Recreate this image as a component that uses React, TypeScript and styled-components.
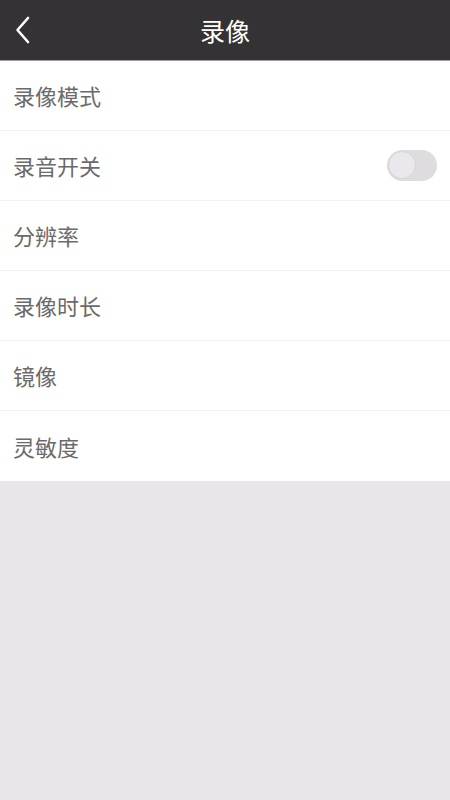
import React from "react";
import styled, { createGlobalStyle } from "styled-components";

const Global = createGlobalStyle`
  html, body { margin: 0; padding: 0; background: #e8e6e8; }
  body { font-family: "Noto Sans CJK SC", "Noto Sans", sans-serif; }
  #root { min-height: 800px; background: #e8e6e8; }
`;

const Page = styled.div`
  width: 450px;
  min-height: 800px;
  background: #e8e6e8;
  display: flex;
  flex-direction: column;
`;

const Header = styled.header`
  height: 60px;
  background: #343234;
  border-bottom: 1px solid #a09ea0;
  display: grid;
  grid-template-columns: 60px 1fr 60px;
  align-items: center;
`;

const BackButton = styled.button`
  background: none;
  border: 0;
  padding: 0 0 0 14px;
  height: 100%;
  display: flex;
  align-items: center;
  cursor: pointer;
`;

const Title = styled.h1`
  margin: 0;
  text-align: center;
  color: #ffffff;
  font-size: 25px;
  font-weight: 400;
  line-height: 1;
`;

const List = styled.ul`
  list-style: none;
  margin: 0;
  padding: 0;
  background: #ffffff;
`;

const Row = styled.li<{ $last?: boolean }>`
  height: 70px;
  box-sizing: border-box;
  border-bottom: ${(p) => (p.$last ? "none" : "1px solid #f3f1f3")};
  display: flex;
  align-items: center;
  justify-content: space-between;
  padding: 0 13px 1px 13px;
`;

const Label = styled.span`
  color: #6b6a6b;
  font-size: 22px;
  line-height: 1;
`;

const Switch = styled.div<{ $on?: boolean }>`
  width: 50px;
  height: 31px;
  border-radius: 16px;
  background: #dedcde;
  box-sizing: border-box;
  padding: 1px;
  display: flex;
  justify-content: ${(p) => (p.$on ? "flex-end" : "flex-start")};
`;

const Knob = styled.div`
  width: 28px;
  height: 28px;
  margin-top: 0.5px;
  border-radius: 50%;
  background: #eae8ec;
  border: 1px solid #d6d4d6;
  box-sizing: border-box;
`;

const items = ["录像模式", "录音开关", "分辨率", "录像时长", "镜像", "灵敏度"];

export default function App() {
  return (
    <Page>
      <Global />
      <Header>
        <BackButton aria-label="返回">
          <svg width="18" height="28" viewBox="0 0 18 28">
            <path d="M14 2 L3.5 14 L14 26" fill="none" stroke="#ffffff" strokeWidth="2.6" strokeLinecap="round" strokeLinejoin="round" />
          </svg>
        </BackButton>
        <Title>录像</Title>
        <span />
      </Header>
      <List>
        {items.map((t, i) => (
          <Row key={t} $last={i === items.length - 1}>
            <Label>{t}</Label>
            {t === "录音开关" && (
              <Switch>
                <Knob />
              </Switch>
            )}
          </Row>
        ))}
      </List>
    </Page>
  );
}
